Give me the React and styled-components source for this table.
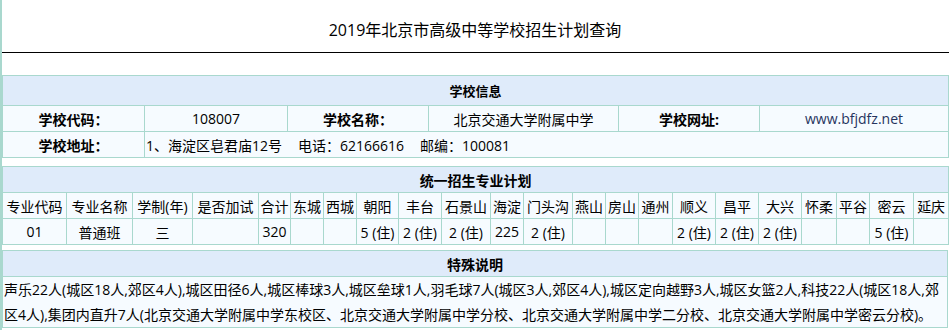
import styled, { createGlobalStyle } from 'styled-components';

const GlobalStyle = createGlobalStyle`
  html, body {
    margin: 0;
    padding: 0;
    background: #ffffff;
  }
  body {
    font-family: "Open Sans", "Noto Sans CJK SC", sans-serif;
    color: #000000;
    border-left: 2px solid #a9d8ce;
    min-height: 330px;
    box-sizing: border-box;
  }
`;

const Page = styled.div`
  display: flex;
  flex-direction: column;
`;

const Title = styled.h1`
  margin: 0;
  height: 53px;
  padding-top: 20px;
  box-sizing: border-box;
  font-size: 16px;
  font-weight: normal;
  line-height: 20px;
  text-align: center;
  border-bottom: 1px solid #000000;
  margin-left: -1px;
`;

const Table = styled.table`
  width: 946px;
  border-collapse: collapse;
  table-layout: fixed;
  margin-top: ${(p) => p.$gap}px;
  font-size: 14px;
`;

const HeadCell = styled.td`
  height: ${(p) => p.$h || 25}px;
  padding: 0;
  background: #dfebfa;
  border: 1px solid #a9d8ce;
  text-align: center;
  font-weight: bold;
  font-size: ${(p) => p.$size || 14}px;
`;

const Cell = styled.td`
  height: 25px;
  padding: 0 1px;
  background: #f6fbff;
  border: 1px solid #a9d8ce;
  text-align: ${(p) => p.$align || 'center'};
  font-weight: ${(p) => (p.$bold ? 'bold' : 'normal')};
  color: ${(p) => p.$color || '#000000'};
  white-space: nowrap;
  overflow: hidden;
`;

const Gap = styled.span`
  margin-left: 16px;
`;

const Note = styled.td`
  padding: 0 1px;
  background: #f6fbff;
  border: 1px solid #a9d8ce;
  line-height: 25px;
  text-align: left;
`;

const planCols = [64, 66, 60, 66, 32, 33, 33, 42, 43, 49, 33, 49, 33, 33, 34, 43, 43, 43, 35, 33, 44, 35];
const planHead = ['专业代码', '专业名称', '学制(年)', '是否加试', '合计', '东城', '西城', '朝阳', '丰台', '石景山', '海淀', '门头沟', '燕山', '房山', '通州', '顺义', '昌平', '大兴', '怀柔', '平谷', '密云', '延庆'];
const planRow = ['01', '普通班', '三', '', '320', '', '', '5 (住)', '2 (住)', '2 (住)', '225', '2 (住)', '', '', '', '2 (住)', '2 (住)', '2 (住)', '', '', '5 (住)', ''];

const infoCols = [142, 143, 141, 190, 141, 189];

export default function App() {
  return (
    <Page>
      <GlobalStyle />
      <Title>2019年北京市高级中等学校招生计划查询</Title>

      <Table $gap={22}>
        <colgroup>
          {infoCols.map((w, i) => (
            <col key={i} style={{ width: w }} />
          ))}
        </colgroup>
        <tbody>
          <tr>
            <HeadCell colSpan={6} $h={29} $size={13}>学校信息</HeadCell>
          </tr>
          <tr>
            <Cell $bold>学校代码：</Cell>
            <Cell>108007</Cell>
            <Cell $bold>学校名称：</Cell>
            <Cell>北京交通大学附属中学</Cell>
            <Cell $bold>学校网址:</Cell>
            <Cell $color="#26345e">www.bfjdfz.net</Cell>
          </tr>
          <tr>
            <Cell $bold>学校地址：</Cell>
            <Cell colSpan={5} $align="left">
              1、海淀区皂君庙12号<Gap>电话：62166616</Gap><Gap>邮编：100081</Gap>
            </Cell>
          </tr>
        </tbody>
      </Table>

      <Table $gap={8}>
        <colgroup>
          {planCols.map((w, i) => (
            <col key={i} style={{ width: w }} />
          ))}
        </colgroup>
        <tbody>
          <tr>
            <HeadCell colSpan={22}>统一招生专业计划</HeadCell>
          </tr>
          <tr>
            {planHead.map((t) => (
              <Cell key={t}>{t}</Cell>
            ))}
          </tr>
          <tr>
            {planRow.map((t, i) => (
              <Cell key={i}>{t}</Cell>
            ))}
          </tr>
        </tbody>
      </Table>

      <Table $gap={5}>
        <tbody>
          <tr>
            <HeadCell>特殊说明</HeadCell>
          </tr>
          <tr>
            <Note>
              声乐22人(城区18人,郊区4人),城区田径6人,城区棒球3人,城区垒球1人,羽毛球7人(城区3人,郊区4人),城区定向越野3人,城区女篮2人,科技22人(城区18人,郊区4人),集团内直升7人(北京交通大学附属中学东校区、北京交通大学附属中学分校、北京交通大学附属中学二分校、北京交通大学附属中学密云分校)。
            </Note>
          </tr>
        </tbody>
      </Table>
    </Page>
  );
}
